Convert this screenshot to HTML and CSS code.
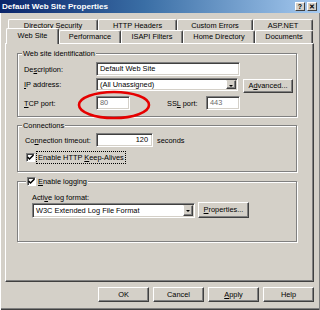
FILE: index.html
```html
<!DOCTYPE html>
<html lang="en">
<head>
  <meta charset="UTF-8">
  <title>Default Web Site Properties</title>
  <link rel="stylesheet" href="styles.css">
</head>
<body>
  <div class="window">
    <div class="titlebar">
      <span class="title">Default Web Site Properties</span>
      <div class="caption-btns">
        <span class="cbtn">?</span>
        <span class="cbtn">&#x2715;</span>
      </div>
    </div>

    <div class="tabs">
      <div class="tabrow back">
        <div class="tab t-dirsec">Directory Security</div>
        <div class="tab t-http">HTTP Headers</div>
        <div class="tab t-errors">Custom Errors</div>
        <div class="tab t-aspnet">ASP.NET</div>
      </div>
      <div class="tabrow front">
        <div class="tab t-website selected">Web Site</div>
        <div class="tab t-perf">Performance</div>
        <div class="tab t-isapi">ISAPI Filters</div>
        <div class="tab t-home">Home Directory</div>
        <div class="tab t-docs">Documents</div>
      </div>
    </div>

    <div class="panel">
      <!-- Web site identification -->
      <div class="group g-ident">
        <div class="legend">Web site identification</div>
        <div class="row r-desc">
          <label class="label">De<u>s</u>cription:</label>
          <div class="input w-desc">Default Web Site</div>
        </div>
        <div class="row r-ip">
          <label class="label"><u>I</u>P address:</label>
          <div class="input select w-ip">(All Unassigned)<span class="drop"></span></div>
          <div class="btn b-adv">A<u>d</u>vanced...</div>
        </div>
        <div class="row r-port">
          <label class="label"><u>T</u>CP port:</label>
          <div class="input w-port dim">80</div>
          <label class="ssl-label">SS<u>L</u> port:</label>
          <div class="input w-port dim">443</div>
        </div>
        <svg class="circle" width="80" height="34" viewBox="0 0 80 34">
          <ellipse cx="38" cy="15" rx="35" ry="13" fill="none" stroke="#e60000" stroke-width="2.6"/>
        </svg>
      </div>

      <!-- Connections -->
      <div class="group g-conn">
        <div class="legend">Connections</div>
        <div class="row r-timeout">
          <label class="label l-timeout">Co<u>n</u>nection timeout:</label>
          <div class="input w-timeout">120</div>
          <span class="unit">seconds</span>
        </div>
        <div class="row r-keep">
          <span class="check"><svg width="7" height="7" viewBox="0 0 7 7"><path d="M0.5 3 L2.5 5 L6.5 1" fill="none" stroke="#000" stroke-width="1.5"/></svg></span>
          <span class="focus">Enable HTTP <u>K</u>eep-Alives</span>
        </div>
      </div>

      <!-- Logging -->
      <div class="group g-log">
        <div class="legend legend-check">
          <span class="check"><svg width="7" height="7" viewBox="0 0 7 7"><path d="M0.5 3 L2.5 5 L6.5 1" fill="none" stroke="#000" stroke-width="1.5"/></svg></span>
          <span class="legend-text"><u>E</u>nable logging</span>
        </div>
        <div class="log-label">Acti<u>v</u>e log format:</div>
        <div class="row r-format">
          <div class="input select w-format">W3C Extended Log File Format<span class="drop"></span></div>
          <div class="btn b-props"><u>P</u>roperties...</div>
        </div>
      </div>
    </div>

    <div class="buttons">
      <div class="btn b-main">OK</div>
      <div class="btn b-main">Cancel</div>
      <div class="btn b-main"><u>A</u>pply</div>
      <div class="btn b-main">Help</div>
    </div>
  </div>
</body>
</html>
```

FILE: styles.css
```css
body { margin: 0; background: #d4d0c8; font-family: "Liberation Sans", Arial, sans-serif; font-size: 7.4px; color: #000; }
u { text-decoration: underline; text-underline-offset: 1px; }

.window {
  width: 320px;
  height: 310px;
  box-sizing: border-box;
  overflow: hidden;
  box-shadow: inset 1px 0 #fff, inset -1px 0 #808080, inset 0 -1px #404040, inset 0 -2px #808080;
}

/* title bar */
.titlebar {
  height: 13px;
  display: flex;
  align-items: center;
  justify-content: space-between;
  padding: 0 3px 0 2px;
  background: linear-gradient(to right, #0a246a, #3a6ea5 45%, #a6caf0);
}
.title { color: #fff; font-weight: bold; font-size: 8.1px; }
.caption-btns { display: flex; gap: 2px; }
.cbtn {
  width: 10px;
  height: 9px;
  box-sizing: border-box;
  background: #d4d0c8;
  border: 1px solid;
  border-color: #fff #404040 #404040 #fff;
  font-size: 7px;
  font-weight: bold;
  line-height: 7px;
  text-align: center;
}

/* tabs */
.tabs { margin-top: 6px; }
.tabrow { display: flex; }
.back { margin-left: 8px; height: 11px; }
.front { margin-left: 6px; height: 13px; }
.tab {
  box-sizing: border-box;
  height: 100%;
  border: 1px solid;
  border-color: #fff #404040 transparent #fff;
  border-bottom: none;
  border-radius: 2px 2px 0 0;
  box-shadow: inset -1px 0 #808080;
  background: #d4d0c8;
  text-align: center;
  line-height: 11px;
  white-space: nowrap;
}
.front .tab { line-height: 12px; }
.tab.selected { height: 16px; margin-top: -2px; position: relative; z-index: 1; line-height: 14px; }
.t-dirsec { width: 90px; }
.t-http { width: 79px; }
.t-errors { width: 76px; }
.t-aspnet { width: 60px; }
.t-website { width: 53px; }
.t-perf { width: 62px; }
.t-isapi { width: 62px; }
.t-home { width: 72px; }
.t-docs { width: 58px; }

/* page panel */
.panel {
  margin-left: 5px;
  width: 309px;
  height: 239px;
  box-sizing: border-box;
  border: 1px solid;
  border-color: #fff #404040 #404040 #fff;
  box-shadow: inset -1px -1px #808080;
  padding: 9px 0 0 11px;
}

.group {
  position: relative;
  width: 280px;
  box-sizing: border-box;
  border: 1px solid #808080;
  box-shadow: inset 1px 1px #fff, 1px 1px #fff;
}
.legend {
  position: absolute;
  top: -5px;
  left: 4px;
  padding: 0 1px;
  line-height: 9px;
  background: #d4d0c8;
}
.legend-check { display: flex; align-items: center; height: 11px; top: -6px; left: 8px; line-height: 11px; }
.legend-text { margin-left: 2px; }

.row { display: flex; align-items: center; }
.label { width: 72px; }

.input {
  box-sizing: border-box;
  height: 14px;
  background: #fff;
  border: 1px solid;
  border-color: #808080 #fff #fff #808080;
  box-shadow: inset 1px 1px #404040, inset -1px -1px #d4d0c8;
  padding-left: 3px;
  line-height: 12px;
  white-space: nowrap;
  position: relative;
}
.dim { color: #6a6a6a; }
.select .drop {
  position: absolute;
  right: 1px;
  top: 1px;
  bottom: 1px;
  width: 10px;
  box-sizing: border-box;
  background: #d4d0c8;
  border: 1px solid;
  border-color: #d4d0c8 #404040 #404040 #fff;
  box-shadow: inset -1px -1px #808080;
}
.select .drop::after {
  content: "";
  position: absolute;
  left: 2px;
  top: 4px;
  border-left: 2px solid transparent;
  border-right: 2px solid transparent;
  border-top: 2px solid #000;
}

.btn {
  box-sizing: border-box;
  background: #d4d0c8;
  border: 1px solid;
  border-color: #fff #404040 #404040 #fff;
  box-shadow: inset -1px -1px #808080;
  text-align: center;
  white-space: nowrap;
}

/* identification group */
.g-ident { height: 64px; padding: 8px 0 0 6px; }
.r-desc { height: 14px; }
.w-desc { width: 144px; }
.r-ip { height: 16px; margin-top: 2px; align-items: flex-start; }
.r-ip .label { line-height: 13px; }
.w-ip { width: 142px; height: 13px; line-height: 11px; }
.b-adv { width: 50px; height: 14px; margin: 1px 0 0 5px; line-height: 12px; }
.r-port { height: 14px; margin-top: 2px; }
.w-port { width: 34px; }
.ssl-label { width: 39px; margin-left: 37px; }
.circle { position: absolute; left: 58px; top: 36px; }

/* connections group */
.g-conn { height: 47px; margin-top: 8px; padding: 7px 0 0 7px; }
.r-timeout { height: 14px; }
.l-timeout { width: 71px; }
.w-timeout { width: 57px; text-align: right; padding-right: 4px; }
.unit { margin-left: 4px; }
.r-keep { height: 13px; margin-top: 4px; }
.check {
  display: inline-flex;
  align-items: center;
  justify-content: center;
  width: 9px;
  height: 9px;
  box-sizing: border-box;
  background: #fff;
  border: 1px solid;
  border-color: #808080 #fff #fff #808080;
  box-shadow: inset 1px 1px #404040;
}
.r-keep .check { margin-left: 1px; }
.focus { margin-left: 1px; padding: 0 1px; border: 1px dotted #000; line-height: 11px; }

/* logging group */
.g-log { height: 61px; margin-top: 9px; padding: 11px 0 0 14px; }
.log-label { line-height: 9px; }
.r-format { align-items: flex-start; }
.w-format { width: 163px; height: 15px; margin-top: 1px; line-height: 13px; }
.b-props { width: 51px; height: 16px; margin-left: 3px; line-height: 14px; }

/* dialog buttons */
.buttons { display: flex; justify-content: flex-end; gap: 4px; margin-top: 5px; padding-right: 6px; }
.b-main { width: 51px; height: 15px; line-height: 13px; }
```
